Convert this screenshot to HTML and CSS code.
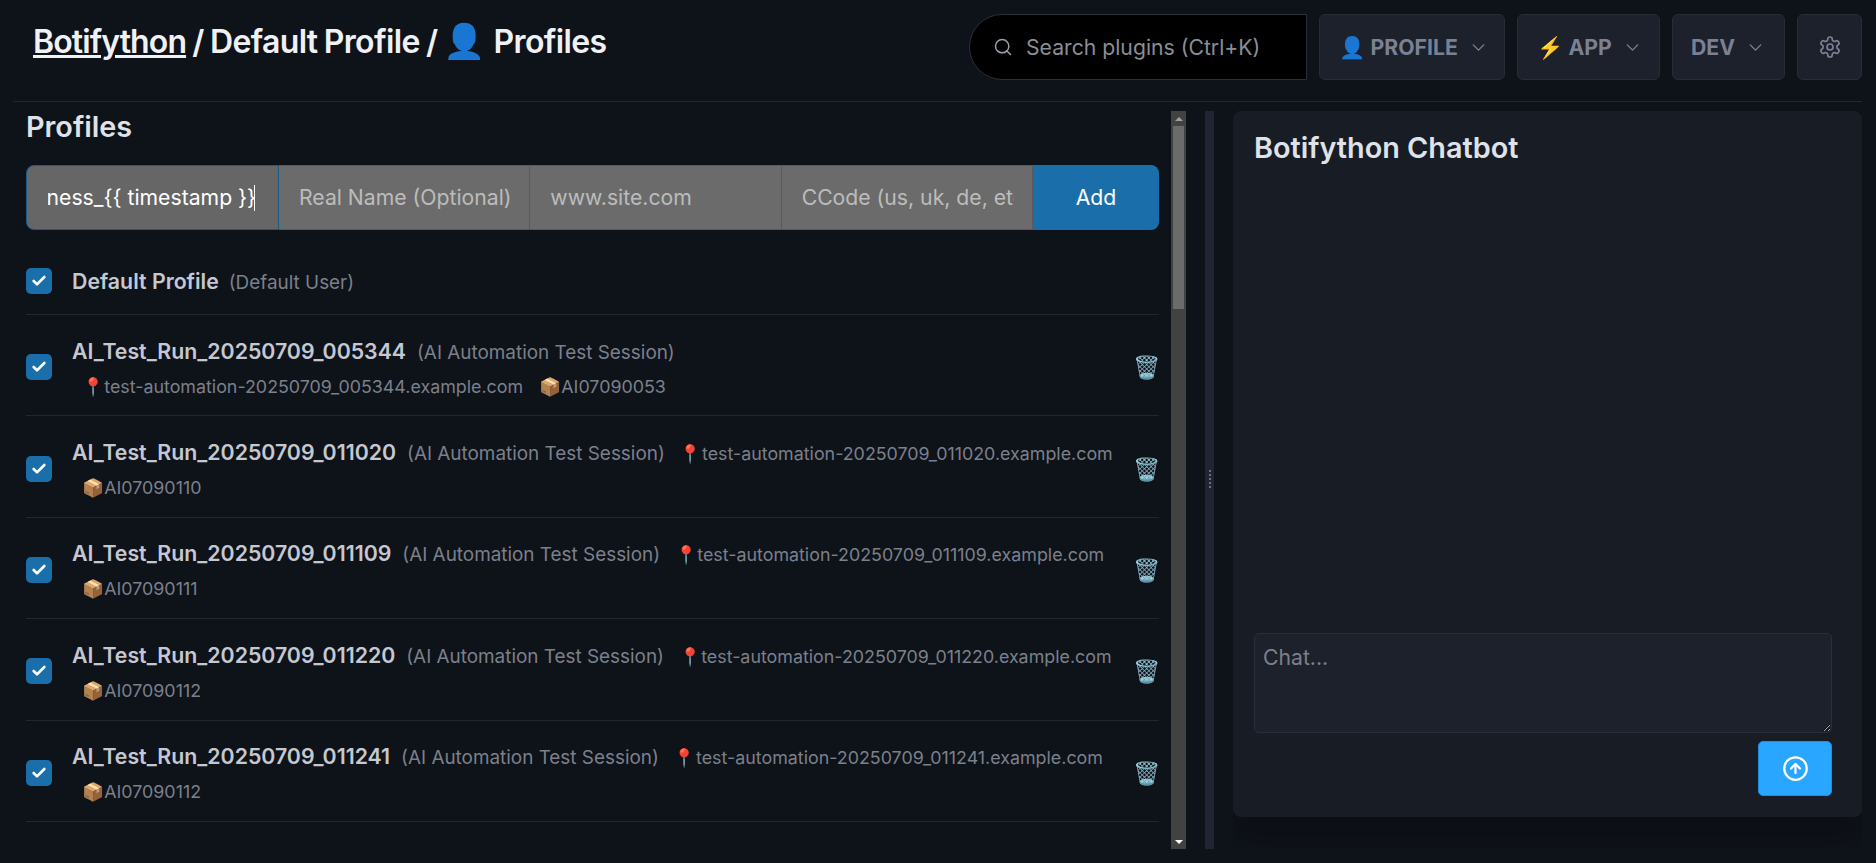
FILE: index.html
```html
<!DOCTYPE html>
<html lang="en">
<head>
    <meta charset="UTF-8">
    <meta name="viewport" content="width=device-width, initial-scale=1.0">
    <title>Botifython - Profiles</title>
    <link rel="stylesheet" href="styles.css">
</head>
<body>
    <header class="topbar">
        <h1 class="crumbs"><a href="#">Botifython</a> / Default Profile / <span class="emoji crumb-icon">👤</span> Profiles</h1>
        <nav class="topnav">
            <label class="search">
                <svg class="search-icon" viewBox="0 0 24 24"><circle cx="11" cy="11" r="8"/><path d="m21 21-4.3-4.3"/></svg>
                <input type="search" placeholder="Search plugins (Ctrl+K)">
            </label>
            <button class="menu-btn profile-btn"><span class="emoji">👤</span> PROFILE <svg class="chevron" viewBox="0 0 24 24"><path d="m6 9 6 6 6-6"/></svg></button>
            <button class="menu-btn app-btn"><span class="emoji">⚡</span> APP <svg class="chevron" viewBox="0 0 24 24"><path d="m6 9 6 6 6-6"/></svg></button>
            <button class="menu-btn dev-btn">DEV <svg class="chevron" viewBox="0 0 24 24"><path d="m6 9 6 6 6-6"/></svg></button>
            <button class="menu-btn gear-btn">
                <svg class="gear" viewBox="0 0 24 24"><path d="M12.22 2h-.44a2 2 0 0 0-2 2v.18a2 2 0 0 1-1 1.73l-.43.25a2 2 0 0 1-2 0l-.15-.08a2 2 0 0 0-2.73.73l-.22.38a2 2 0 0 0 .73 2.73l.15.1a2 2 0 0 1 1 1.72v.51a2 2 0 0 1-1 1.74l-.15.09a2 2 0 0 0-.73 2.73l.22.38a2 2 0 0 0 2.73.73l.15-.08a2 2 0 0 1 2 0l.43.25a2 2 0 0 1 1 1.73V20a2 2 0 0 0 2 2h.44a2 2 0 0 0 2-2v-.18a2 2 0 0 1 1-1.73l.43-.25a2 2 0 0 1 2 0l.15.08a2 2 0 0 0 2.73-.73l.22-.39a2 2 0 0 0-.73-2.73l-.15-.08a2 2 0 0 1-1-1.74v-.5a2 2 0 0 1 1-1.74l.15-.09a2 2 0 0 0 .73-2.73l-.22-.38a2 2 0 0 0-2.73-.73l-.15.08a2 2 0 0 1-2 0l-.43-.25a2 2 0 0 1-1-1.73V4a2 2 0 0 0-2-2z"/><circle cx="12" cy="12" r="3"/></svg>
            </button>
        </nav>
    </header>

    <main class="workspace">
        <section class="profiles-panel">
            <h2 class="panel-title">Profiles</h2>
            <form class="add-form" action="#">
                <div class="name-field">
                    <input id="newName" type="text" value="Test_Business_{{ timestamp }}">
                    <span class="caret"></span>
                </div>
                <input type="text" placeholder="Real Name (Optional)">
                <input type="text" placeholder="www.site.com">
                <input type="text" placeholder="CCode (us, uk, de, etc)">
                <button type="button" class="add-btn">Add</button>
            </form>

            <ul class="profile-list">
                <li class="profile-row default-row">
                    <input type="checkbox" class="check" checked>
                    <div class="info">
                        <span class="name">Default Profile</span>
                        <span class="note">(Default User)</span>
                    </div>
                </li>
                <li class="profile-row">
                    <input type="checkbox" class="check" checked>
                    <div class="info">
                        <span class="name">AI_Test_Run_20250709_005344</span>
                        <span class="note">(AI Automation Test Session)</span>
                        <span class="meta"><span class="emoji">📍</span>test-automation-20250709_005344.example.com</span>
                        <span class="meta"><span class="emoji">📦</span>AI07090053</span>
                    </div>
                    <button type="button" class="trash emoji">🗑️</button>
                </li>
                <li class="profile-row">
                    <input type="checkbox" class="check" checked>
                    <div class="info">
                        <span class="name">AI_Test_Run_20250709_011020</span>
                        <span class="note">(AI Automation Test Session)</span>
                        <span class="meta"><span class="emoji">📍</span>test-automation-20250709_011020.example.com</span>
                        <span class="meta"><span class="emoji">📦</span>AI07090110</span>
                    </div>
                    <button type="button" class="trash emoji">🗑️</button>
                </li>
                <li class="profile-row">
                    <input type="checkbox" class="check" checked>
                    <div class="info">
                        <span class="name">AI_Test_Run_20250709_011109</span>
                        <span class="note">(AI Automation Test Session)</span>
                        <span class="meta"><span class="emoji">📍</span>test-automation-20250709_011109.example.com</span>
                        <span class="meta"><span class="emoji">📦</span>AI07090111</span>
                    </div>
                    <button type="button" class="trash emoji">🗑️</button>
                </li>
                <li class="profile-row">
                    <input type="checkbox" class="check" checked>
                    <div class="info">
                        <span class="name">AI_Test_Run_20250709_011220</span>
                        <span class="note">(AI Automation Test Session)</span>
                        <span class="meta"><span class="emoji">📍</span>test-automation-20250709_011220.example.com</span>
                        <span class="meta"><span class="emoji">📦</span>AI07090112</span>
                    </div>
                    <button type="button" class="trash emoji">🗑️</button>
                </li>
                <li class="profile-row">
                    <input type="checkbox" class="check" checked>
                    <div class="info">
                        <span class="name">AI_Test_Run_20250709_011241</span>
                        <span class="note">(AI Automation Test Session)</span>
                        <span class="meta"><span class="emoji">📍</span>test-automation-20250709_011241.example.com</span>
                        <span class="meta"><span class="emoji">📦</span>AI07090112</span>
                    </div>
                    <button type="button" class="trash emoji">🗑️</button>
                </li>
                <li class="profile-row">
                    <input type="checkbox" class="check" checked>
                    <div class="info">
                        <span class="name">AI_Test_Run_20250709_011302</span>
                        <span class="note">(AI Automation Test Session)</span>
                        <span class="meta"><span class="emoji">📍</span>test-automation-20250709_011302.example.com</span>
                        <span class="meta"><span class="emoji">📦</span>AI07090113</span>
                    </div>
                    <button type="button" class="trash emoji">🗑️</button>
                </li>
            </ul>
        </section>

        <div class="scrollbar">
            <span class="scroll-btn"><i class="arrow-up"></i></span>
            <span class="scroll-thumb"></span>
            <span class="scroll-btn"><i class="arrow-down"></i></span>
        </div>

        <div class="splitter"><span class="grip"></span></div>

        <aside class="chat-col">
            <section class="chat-card">
                <h2 class="panel-title chat-title">Botifython Chatbot</h2>
                <form class="chat-form" action="#">
                    <textarea placeholder="Chat..."></textarea>
                    <button type="button" class="send-btn">
                        <svg viewBox="0 0 24 24"><circle cx="12" cy="12" r="10"/><path d="m16 12-4-4-4 4"/><path d="M12 16V8"/></svg>
                    </button>
                </form>
            </section>
        </aside>
    </main>

    <script>
        const nameInput = document.getElementById('newName');
        nameInput.scrollLeft = nameInput.scrollWidth;
    </script>
</body>
</html>
```

FILE: styles.css
```css
:root {
    color-scheme: dark;
}
* {
    box-sizing: border-box;
}
html, body {
    height: 100%;
}
body {
    margin: 0;
    padding: 0 14px 14px 10px;
    overflow: hidden;
    background-color: #0e1219;
    color: #c2c7d0;
    font-family: Inter, "Noto Sans", sans-serif;
    font-size: 21.2px;
}
.emoji {
    font-family: "Noto Color Emoji", Inter, sans-serif;
}

/* top bar */
.topbar {
    height: 102px;
    margin-left: 3px;
    display: flex;
    justify-content: space-between;
    align-items: flex-start;
    border-bottom: 1px solid #23262f;
}
.crumbs {
    margin: 22px 0 0 20px;
    font-size: 32px;
    line-height: 40px;
    letter-spacing: -0.64px;
    word-spacing: -1.2px;
    font-weight: 600;
    color: #f0f1f4;
}
.crumbs a {
    color: #f0f1f4;
    letter-spacing: -0.9px;
    text-decoration-thickness: 3px;
}
.crumb-icon {
    font-size: 34px;
    line-height: 1;
    margin-right: 2px;
}
.topnav {
    display: flex;
    gap: 12px;
    margin-top: 14px;
}
.search {
    width: 338px;
    height: 66px;
    display: flex;
    align-items: center;
    gap: 11px;
    padding-left: 23px;
    background-color: #000;
    border: 1px solid #2c2f38;
    border-radius: 33px 0 0 33px;
}
.search-icon {
    width: 20px;
    height: 20px;
    fill: none;
    stroke: #9aa0ab;
    stroke-width: 1.8;
    stroke-linecap: round;
    flex: none;
}
.search input {
    flex: 1;
    min-width: 0;
    background: none;
    border: none;
    outline: none;
    font: inherit;
    color: #c2c7d0;
}
.search input::placeholder {
    color: #8a8e97;
}
.menu-btn {
    height: 66px;
    padding: 0;
    display: flex;
    align-items: center;
    justify-content: center;
    gap: 5px;
    background-color: #1c212c;
    border: 1px solid #282c37;
    border-radius: 6px;
    font: inherit;
    font-weight: 700;
    color: #7b8195;
}
.profile-btn {
    width: 186px;
    padding-left: 4px;
}
.app-btn {
    width: 143px;
    padding-left: 3px;
}
.dev-btn {
    width: 113px;
}
.chevron {
    width: 21px;
    height: 21px;
    margin-left: 5px;
    fill: none;
    stroke: #7b8195;
    stroke-width: 1.6;
    stroke-linecap: round;
    stroke-linejoin: round;
}
.gear-btn {
    width: 65px;
}
.gear {
    width: 24px;
    height: 24px;
    fill: none;
    stroke: #7b8195;
    stroke-width: 1.7;
    stroke-linecap: round;
    stroke-linejoin: round;
}

/* main columns */
.workspace {
    height: 738px;
    margin-top: 9px;
    display: flex;
}
.profiles-panel {
    width: 1161px;
    flex: none;
    padding: 0 12px 0 16px;
    overflow: hidden;
}
.panel-title {
    margin: 0;
    font-size: 28.8px;
    line-height: 32px;
    font-weight: 600;
    color: #dfe2e8;
}
.add-form {
    display: flex;
    margin-top: 22px;
    height: 65px;
}
.add-form input {
    flex: 1 1 0;
    width: 0;
    min-width: 0;
    padding: 0 18px 2px 20px;
    background-color: #6b6b6b;
    border: 1px solid #5a5a5a;
    border-left-width: 0;
    font: inherit;
    color: #fff;
    outline: none;
}
.add-form input::placeholder {
    color: #bcbcbc;
}
.name-field {
    flex: 0 0 253px;
    display: flex;
    align-items: center;
    padding: 0 23px 0 21px;
    background-color: #666;
    border: 1px solid #1d5a8c;
    border-radius: 8px 0 0 8px;
}
.add-form .name-field input {
    width: 100%;
    padding: 0 0 2px;
    background: none;
    border: none;
}
.caret {
    flex: none;
    width: 1px;
    height: 26px;
    margin-left: -2px;
    background-color: #fff;
}
.add-btn {
    flex: none;
    width: 126px;
    padding: 0 0 2px;
    background-color: #1a6fab;
    border: none;
    border-radius: 0 8px 8px 0;
    font: inherit;
    color: #fff;
}
.profile-list {
    margin: 18px 0 0;
    padding: 0;
    list-style: none;
}
.profile-row {
    display: flex;
    align-items: center;
    height: 101.4px;
    padding-top: 7px;
    border-bottom: 1px solid #23262f;
}
.default-row {
    height: 67px;
    padding-top: 0;
}
.default-row .info {
    padding-top: 2px;
}
.default-row .name {
    margin-right: 4px;
}
.default-row .check {
    margin-bottom: 0;
}
.check {
    appearance: none;
    flex: none;
    width: 26px;
    height: 26px;
    margin: 0 20px 3px 0;
    background-color: #1a6fab;
    border-radius: 5px;
    background-image: url("data:image/svg+xml,%3Csvg xmlns='http://www.w3.org/2000/svg' viewBox='0 0 24 24' fill='none' stroke='%23fff' stroke-width='4' stroke-linecap='round' stroke-linejoin='round'%3E%3Cpath d='M20 6 9 17l-5-5'/%3E%3C/svg%3E");
    background-repeat: no-repeat;
    background-position: center;
    background-size: 16px;
}
.info {
    flex: 1;
    min-width: 0;
    padding-right: 13px;
    line-height: 32px;
}
.name {
    font-size: 21.3px;
    font-weight: 600;
    color: #c5c8d1;
    margin-right: 5px;
}
.note {
    font-size: 18.9px;
    color: #7c808c;
    margin-right: -1px;
}
.meta {
    display: inline-block;
    font-size: 17.85px;
    color: #7c808c;
    margin-left: 10px;
}
.trash {
    flex: none;
    width: 23px;
    margin: 0 3px 2px 0;
    padding: 0;
    background: none;
    border: none;
    font-size: 22px;
}

/* drawn scrollbar, the list itself does not scroll here */
.scrollbar {
    width: 15px;
    flex: none;
    display: flex;
    flex-direction: column;
    background-color: #424242;
}
.scroll-btn {
    height: 15px;
    flex: none;
    display: flex;
    align-items: center;
    justify-content: center;
}
.scroll-thumb {
    height: 183px;
    margin: 0 2px auto;
    background-color: #6b6b6b;
}
.arrow-up {
    border: 4px solid transparent;
    border-top: none;
    border-bottom: 4px solid #a0a0a0;
}
.arrow-down {
    border: 4px solid transparent;
    border-bottom: none;
    border-top: 4px solid #fff;
}

/* splitter between list and chat */
.splitter {
    width: 9px;
    flex: none;
    margin: 0 19px;
    display: flex;
    align-items: center;
    justify-content: center;
    background-color: #212531;
}
.grip {
    width: 2px;
    height: 20px;
    background-image: repeating-linear-gradient(#6e7280 0 2px, transparent 2px 4px);
}

/* chat */
.chat-col {
    flex: 1;
    min-width: 0;
    overflow: hidden;
}
.chat-card {
    height: 706px;
    padding: 21px 30px 21px 21px;
    display: flex;
    flex-direction: column;
    justify-content: space-between;
    background-color: #181c25;
    border-radius: 8px;
    box-shadow: 0 16px 32px rgba(0, 0, 0, 0.2);
}
.chat-form {
    display: flex;
    flex-direction: column;
    align-items: flex-end;
    gap: 8px;
}
.chat-form textarea {
    width: 100%;
    height: 100px;
    padding: 10px 8px;
    background-color: #1d212c;
    border: 1px solid #2a2e3a;
    border-radius: 5px;
    font: inherit;
    color: #c2c7d0;
    outline: none;
}
.chat-form textarea::placeholder {
    color: #7c808c;
}
.send-btn {
    width: 74px;
    height: 55px;
    display: flex;
    align-items: center;
    justify-content: center;
    background-color: #29a6ff;
    border: 1px solid #1f8fdf;
    border-radius: 5px;
}
.send-btn svg {
    width: 27px;
    height: 27px;
    fill: none;
    stroke: #fff;
    stroke-width: 2;
    stroke-linecap: round;
    stroke-linejoin: round;
}
```
